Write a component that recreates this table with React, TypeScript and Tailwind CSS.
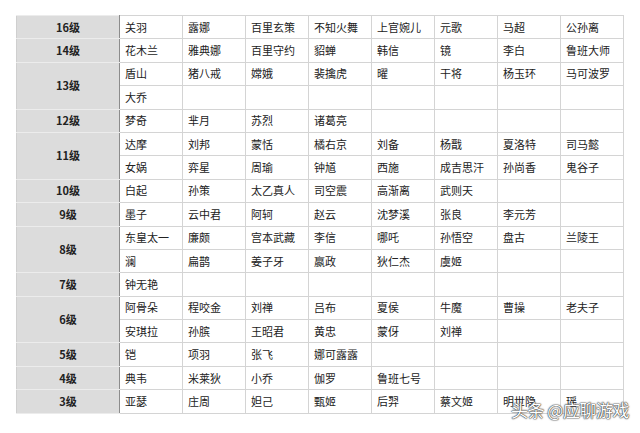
import React from "react";

type Level = { label: string; rows: string[][] };

const levels: Level[] = [
  { label: "16级", rows: [["关羽", "露娜", "百里玄策", "不知火舞", "上官婉儿", "元歌", "马超", "公孙离"]] },
  { label: "14级", rows: [["花木兰", "雅典娜", "百里守约", "貂蝉", "韩信", "镜", "李白", "鲁班大师"]] },
  {
    label: "13级",
    rows: [
      ["盾山", "猪八戒", "嫦娥", "裴擒虎", "曜", "干将", "杨玉环", "马可波罗"],
      ["大乔"],
    ],
  },
  { label: "12级", rows: [["梦奇", "芈月", "苏烈", "诸葛亮"]] },
  {
    label: "11级",
    rows: [
      ["达摩", "刘邦", "蒙恬", "橘右京", "刘备", "杨戬", "夏洛特", "司马懿"],
      ["女娲", "弈星", "周瑜", "钟馗", "西施", "成吉思汗", "孙尚香", "鬼谷子"],
    ],
  },
  { label: "10级", rows: [["白起", "孙策", "太乙真人", "司空震", "高渐离", "武则天"]] },
  { label: "9级", rows: [["墨子", "云中君", "阿轲", "赵云", "沈梦溪", "张良", "李元芳"]] },
  {
    label: "8级",
    rows: [
      ["东皇太一", "廉颇", "宫本武藏", "李信", "哪吒", "孙悟空", "盘古", "兰陵王"],
      ["澜", "扁鹊", "姜子牙", "嬴政", "狄仁杰", "虞姬"],
    ],
  },
  { label: "7级", rows: [["钟无艳"]] },
  {
    label: "6级",
    rows: [
      ["阿骨朵", "程咬金", "刘禅", "吕布", "夏侯", "牛魔", "曹操", "老夫子"],
      ["安琪拉", "孙膑", "王昭君", "黄忠", "蒙伢", "刘禅"],
    ],
  },
  { label: "5级", rows: [["铠", "项羽", "张飞", "娜可露露"]] },
  { label: "4级", rows: [["典韦", "米莱狄", "小乔", "伽罗", "鲁班七号"]] },
  { label: "3级", rows: [["亚瑟", "庄周", "妲己", "甄姬", "后羿", "蔡文姬", "明世隐", "瑶"]] },
];

const pad = (r: string[]) => Array.from({ length: 8 }, (_, i) => r[i] ?? "");

export default function App() {
  return (
    <div className="relative w-[640px] h-[433px] bg-white overflow-hidden font-['Noto_Sans_CJK_SC',sans-serif] text-[11px] text-[#222]">
      <div className="pt-[15px] pl-[16px]">
        <table className="border-collapse table-fixed w-[607px] border border-[#cfcfcf]">
          <colgroup>
            <col className="w-[103px]" />
            {Array.from({ length: 8 }, (_, i) => (
              <col key={i} className="w-[63px]" />
            ))}
          </colgroup>
          <tbody>
            {levels.map((lv) =>
              lv.rows.map((r, ri) => (
                <tr key={lv.label + ri} className="h-[23.4px]">
                  {ri === 0 && (
                    <td
                      rowSpan={lv.rows.length}
                      className="bg-[#dcdcdc] border-t border-b border-[#ececec] border-r border-r-[#8c8c8c] text-center font-bold align-middle p-0 leading-none"
                    >
                      {lv.label}
                    </td>
                  )}
                  {pad(r).map((n, i) => (
                    <td
                      key={i}
                      className="border border-[#d4d4d4] pl-[5px] pr-0 py-0 align-middle whitespace-nowrap leading-none"
                    >
                      {n}
                    </td>
                  ))}
                </tr>
              ))
            )}
          </tbody>
        </table>
      </div>
      <div className="absolute left-[511px] top-[401px] text-[17px] leading-none text-white tracking-[-0.5px] [text-shadow:0_0_1px_#333,0_0_1px_#333,0_0_2px_#555]">
        头条 @应聊游戏
      </div>
    </div>
  );
}
